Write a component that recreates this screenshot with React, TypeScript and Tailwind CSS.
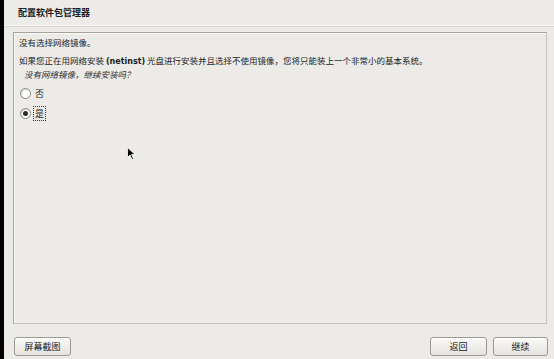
import React, { useState } from 'react';

const font = { fontFamily: '"Noto Sans CJK SC", "DejaVu Sans", sans-serif' };
const latin = { fontFamily: '"DejaVu Sans", sans-serif' };

const Radio: React.FC<{ checked: boolean; label: string; focused?: boolean; onClick: () => void }> = ({
  checked,
  label,
  focused,
  onClick,
}) => (
  <div className="flex items-center h-[16px] cursor-default" onClick={onClick}>
    <span className="w-[11px] h-[11px] rounded-full border border-[#8a8782] bg-white flex items-center justify-center shadow-[inset_1px_1px_1px_rgba(0,0,0,0.15)]">
      {checked && <span className="w-[5px] h-[5px] rounded-full bg-[#2a2a2a]" />}
    </span>
    <span
      className={`ml-[3px] px-[1px] text-[9px] leading-[13px] ${
        focused ? 'outline outline-1 outline-dotted outline-[#333]' : ''
      }`}
    >
      {label}
    </span>
  </div>
);

const Button: React.FC<{ label: string; className?: string }> = ({ label, className }) => (
  <button
    className={`h-[19px] rounded-[3px] border border-[#9c9893] bg-gradient-to-b from-[#fbfaf9] to-[#e6e3de] text-[9px] leading-[17px] text-[#1a1a1a] shadow-[inset_0_1px_0_#fff] ${className ?? ''}`}
  >
    {label}
  </button>
);

const App: React.FC = () => {
  const [choice, setChoice] = useState<'no' | 'yes'>('yes');

  return (
    <div className="w-[554px] h-[359px] flex overflow-hidden text-[#1c1c1c]" style={font}>
      <div className="w-[4px] bg-black" />
      <div className="flex-1 flex flex-col bg-[#edebe7]">
        {/* Title bar */}
        <div className="h-[26px] flex items-center pl-[14px] border-b border-[#f8f7f5]">
          <h1 className="text-[9px] leading-[12px] font-bold">配置软件包管理器</h1>
        </div>
        <div className="h-px bg-[#d9d6d1]" />

        {/* Question panel */}
        <div className="flex-1 pt-[5px] pl-[9px] pr-[7px] flex">
          <div className="flex-1 border border-[#a5a29d] border-r-[#c4c1bb] border-b-[#c4c1bb] shadow-[inset_1px_1px_0_#fbfaf8] pl-[5px] pt-[3px] text-[8.5px] relative">
            <p className="leading-[13px]">没有选择网络镜像。</p>
            <p className="mt-[5px] leading-[13px]">
              如果您正在用网络安装{' '}
              <span className="font-bold text-[8px]" style={latin}>
                (netinst)
              </span>{' '}
              光盘进行安装并且选择不使用镜像，您将只能装上一个非常小的基本系统。
            </p>
            <p className="italic leading-[12px] pl-[5px] text-[#333]">没有网络镜像，继续安装吗？</p>

            <div className="mt-[5px] pl-[1px] flex flex-col gap-[4px]">
              <Radio checked={choice === 'no'} label="否" onClick={() => setChoice('no')} />
              <Radio
                checked={choice === 'yes'}
                label="是"
                focused
                onClick={() => setChoice('yes')}
              />
            </div>

            {/* mouse pointer */}
            <svg
              className="absolute left-[113px] top-[114px]"
              width="9"
              height="13"
              viewBox="0 0 9 13"
            >
              <path d="M0.5 0.5 L0.5 10.5 L3 8 L5 12.5 L6.5 11.8 L4.6 7.5 L8 7.5 Z" fill="#000" stroke="#fff" strokeWidth="0.8" />
            </svg>
          </div>
        </div>

        {/* Footer buttons */}
        <div className="h-[35px] flex items-start pt-[13px] pl-[10px] pr-[6px]">
          <Button label="屏幕截图" className="w-[57px]" />
          <div className="flex-1" />
          <Button label="返回" className="w-[57px]" />
          <Button label="继续" className="w-[55px] ml-[6px]" />
        </div>
      </div>
    </div>
  );
};

export default App;
